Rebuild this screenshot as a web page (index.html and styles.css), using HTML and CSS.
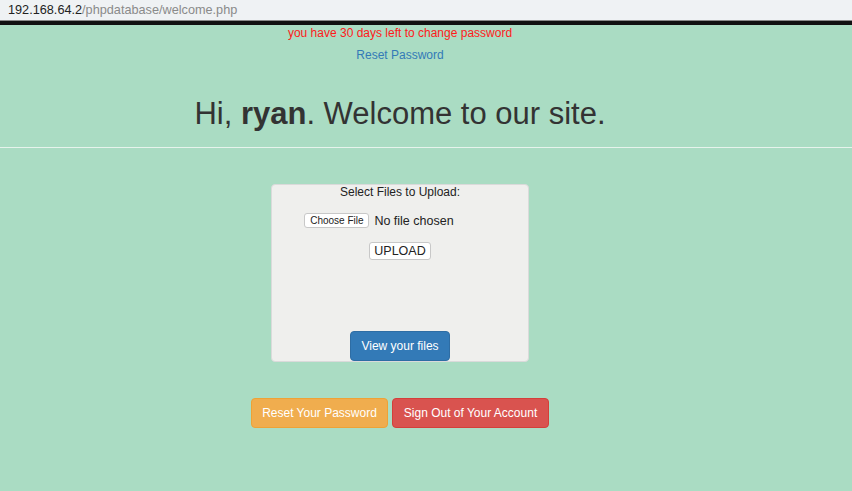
FILE: index.html
```html
<!DOCTYPE html>
<html>
<head>
<meta charset="utf-8">
<link rel="stylesheet" href="styles.css">
</head>
<body>
<div class="urlbar"><span class="host">192.168.64.2</span><span class="path">/phpdatabase/welcome.php</span></div>
<div class="page">
  <div class="col">
    <p class="warn">you have 30 days left to change password</p>
    <a class="reset-link" href="#">Reset Password</a>
    <h1 class="greet">Hi, <b>ryan</b>. Welcome to our site.</h1>
  </div>
  <hr class="rule">
  <div class="col">
    <div class="panel">
      <div class="panel-title">Select Files to Upload:</div>
      <div class="file-row"><span class="choose">Choose File</span><span class="nofile">No file chosen</span></div>
      <div><span class="upload">UPLOAD</span></div>
      <div class="spacer"></div>
      <a class="btn btn-primary" href="#">View your files</a>
    </div>
    <div class="actions">
      <a class="btn btn-warning" href="#">Reset Your Password</a>
      <a class="btn btn-danger" href="#">Sign Out of Your Account</a>
    </div>
  </div>
</div>
</body>
</html>
```
FILE: styles.css
```css
html, body { margin: 0; padding: 0; }
body {
  background: #aadcc3;
  font-family: "Liberation Sans", Arial, sans-serif;
  color: #333;
  height: 491px;
  overflow: hidden;
}
.urlbar {
  height: 21px;
  background: #eff2f4;
  border-bottom: 1px solid #8a8a8a;
  box-sizing: border-box;
  font-size: 12.7px;
  line-height: 20px;
  padding-left: 8px;
}
.host { color: #222; }
.path { color: #8a8a8a; }
.page {
  border-top: 4px solid #111;
}
.col {
  width: 800px;
  text-align: center;
}
.warn {
  margin: 0;
  padding-top: 1px;
  color: #ff1a1a;
  font-size: 12px;
  line-height: 14px;
}
.reset-link {
  display: inline-block;
  margin-top: 8px;
  color: #337ab7;
  font-size: 12px;
  line-height: 14px;
  text-decoration: none;
}
.greet {
  margin: 31px 0 0;
  font-size: 31px;
  font-weight: normal;
  line-height: 40px;
  color: #333;
}
.greet b { font-weight: bold; }
.rule {
  margin: 13px 0 0;
  border: 0;
  border-top: 1px solid #e6f3ec;
  height: 0;
}
.panel {
  width: 258px;
  height: 178px;
  margin: 36px auto 0;
  box-sizing: border-box;
  background: #efefed;
  border: 1px solid #dadada;
  border-radius: 4px;
  display: flex;
  flex-direction: column;
  align-items: center;
}
.panel-title {
  font-size: 12px;
  color: #222;
  line-height: 14px;
  margin-top: 0;
}
.file-row {
  margin-top: 14px;
  display: flex;
  align-items: center;
  margin-left: -42px;
  white-space: nowrap;
}
.choose {
  font-size: 10px;
  color: #222;
  background: #fff;
  border: 1px solid #c8c8c8;
  border-radius: 3px;
  padding: 0;
  line-height: 13px;
  width: 65px;
  box-sizing: border-box;
  text-align: center;
}
.nofile {
  font-size: 12.5px;
  color: #222;
  margin-left: 5px;
}
.upload {
  display: inline-block;
  margin-top: 14px;
  font-size: 12.5px;
  color: #222;
  background: #fff;
  border: 1px solid #c8c8c8;
  border-radius: 3px;
  line-height: 16px;
  width: 62px;
  box-sizing: border-box;
  text-align: center;
}
.spacer { flex: 1; }
.btn {
  display: inline-block;
  box-sizing: border-box;
  font-size: 12px;
  color: #fff;
  text-decoration: none;
  border-radius: 4px;
  line-height: 18px;
  padding: 5px 0;
  border: 1px solid transparent;
  white-space: nowrap;
  text-align: center;
}
.btn-primary {
  background: #337ab7;
  border-color: #2e6da4;
  width: 100px;
  height: 30px;
  margin-bottom: 0;
}
.actions {
  margin-top: 36px;
  display: flex;
  justify-content: center;
  gap: 4px;
}
.btn-warning {
  background: #f0ad4e;
  border-color: #eea236;
  width: 137px;
  height: 30px;
}
.btn-danger {
  background: #d9534f;
  border-color: #d43f3a;
  width: 157px;
  height: 30px;
}
```
